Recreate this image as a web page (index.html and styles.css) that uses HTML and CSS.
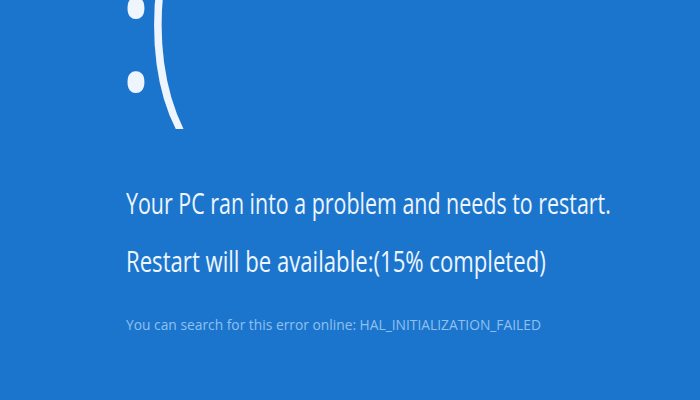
FILE: index.html
```html
<!DOCTYPE html>
<html lang="en">
<head>
<meta charset="utf-8">
<title>Your PC ran into a problem</title>
<link rel="stylesheet" href="styles.css">
</head>
<body>
<main class="screen">
  <div class="face"><span class="colon">:</span><span class="paren">(</span></div>
  <p class="headline first">Your PC ran into a problem and needs to restart.</p>
  <p class="headline second">Restart will be available:(15% completed)</p>
  <p class="info">You can search for this error online: HAL_INITIALIZATION_FAILED</p>
</main>
</body>
</html>
```
FILE: styles.css
```css
html, body {
  margin: 0;
  height: 100%;
  background: #1c75cd;
  overflow: hidden;
}
.screen {
  display: flex;
  flex-direction: column;
  align-items: flex-start;
  padding-left: 126px;
  font-family: "Open Sans", "DejaVu Sans", sans-serif;
  color: #eef5fd;
}
.face {
  display: flex;
  align-items: baseline;
  font-weight: 300;
  font-size: 170px;
  line-height: 170px;
  height: 170px;
  margin: -87px 0 91px -9px;
}
.colon {
  display: inline-block;
  font-weight: 400;
  transform: scaleX(0.85);
  transform-origin: left center;
}
.paren {
  display: inline-block;
  font-size: 240px;
  line-height: 170px;
  margin-left: -14px;
  transform: scaleX(0.62);
  transform-origin: left center;
}
.headline {
  margin: 0;
  font-weight: 400;
  font-size: 30px;
  line-height: 58px;
  white-space: nowrap;
  transform-origin: left center;
}
.first {
  transform: scaleX(0.714);
}
.second {
  transform: scaleX(0.738);
}
.info {
  margin: 24px 0 0;
  font-size: 15px;
  color: #8fc1f0;
  white-space: nowrap;
  transform: scaleX(0.92);
  transform-origin: left center;
}
```
